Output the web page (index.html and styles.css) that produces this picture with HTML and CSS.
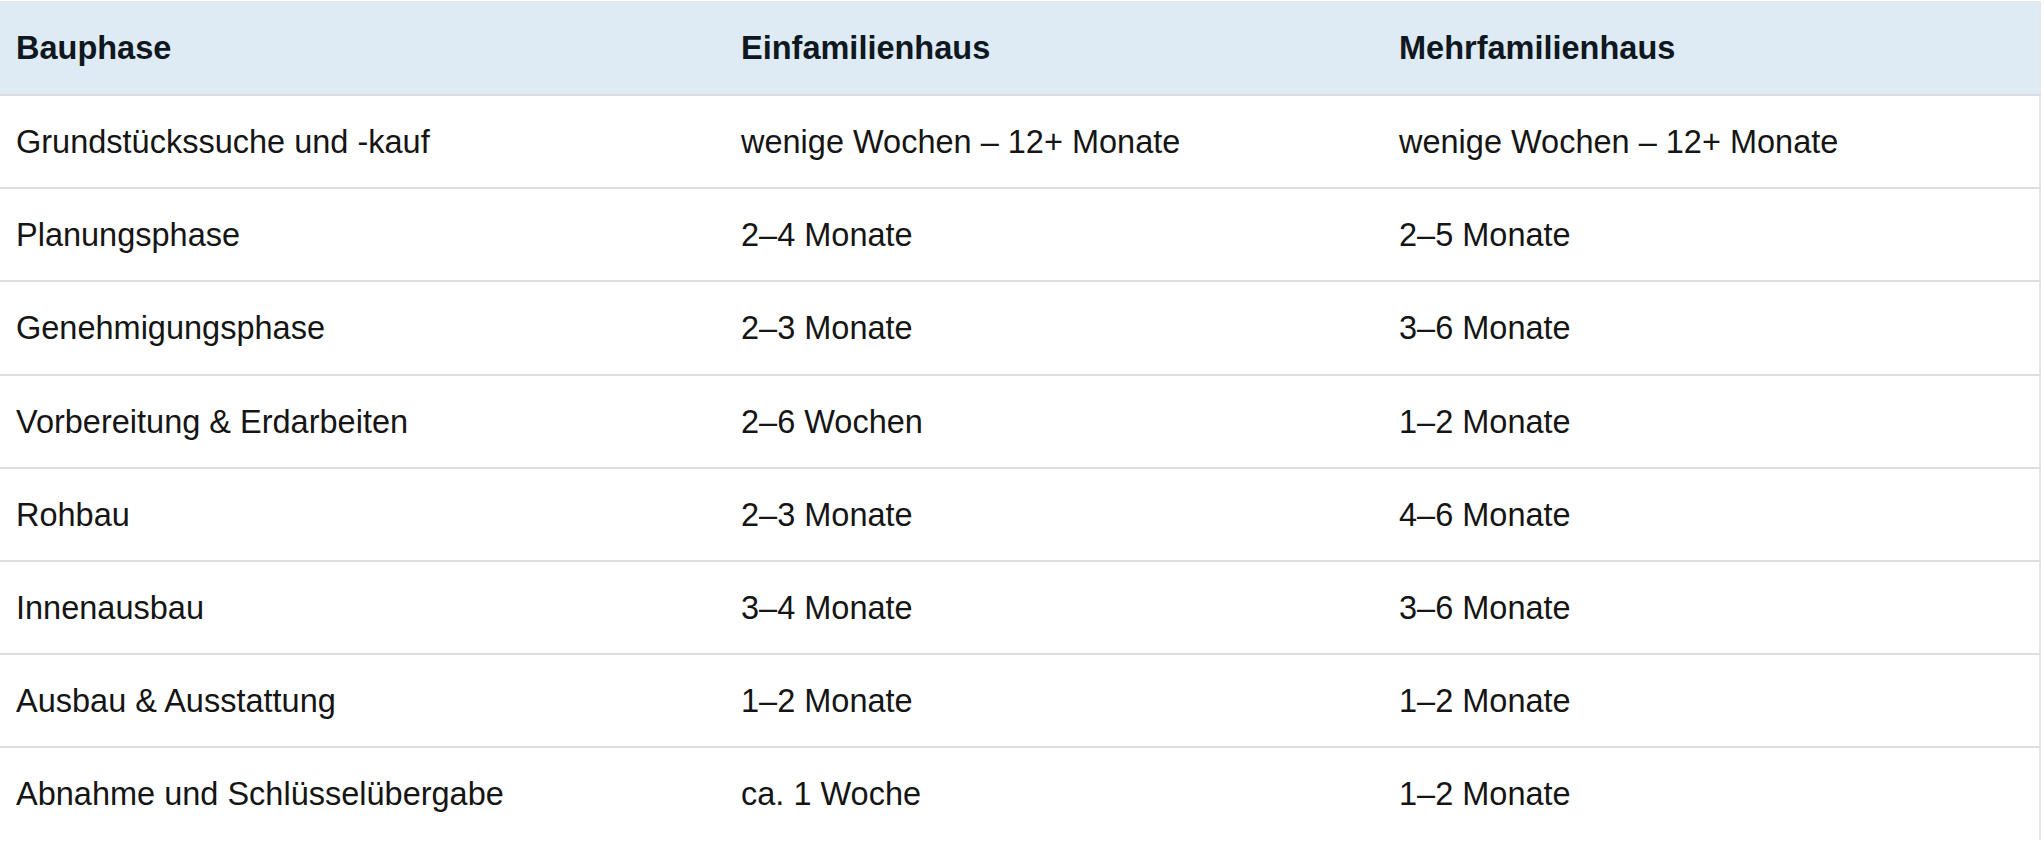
FILE: index.html
```html
<!DOCTYPE html>
<html lang="de">
<head>
<meta charset="utf-8">
<link rel="stylesheet" href="styles.css">
</head>
<body>
<div class="wrap">
<table class="phases">
  <colgroup>
    <col class="c1"><col class="c2"><col class="c3">
  </colgroup>
  <thead>
    <tr><th>Bauphase</th><th>Einfamilienhaus</th><th>Mehrfamilienhaus</th></tr>
  </thead>
  <tbody>
    <tr><td>Grundstückssuche und -kauf</td><td>wenige Wochen – 12+ Monate</td><td>wenige Wochen – 12+ Monate</td></tr>
    <tr><td>Planungsphase</td><td>2–4 Monate</td><td>2–5 Monate</td></tr>
    <tr><td>Genehmigungsphase</td><td>2–3 Monate</td><td>3–6 Monate</td></tr>
    <tr><td>Vorbereitung &amp; Erdarbeiten</td><td>2–6 Wochen</td><td>1–2 Monate</td></tr>
    <tr><td>Rohbau</td><td>2–3 Monate</td><td>4–6 Monate</td></tr>
    <tr><td>Innenausbau</td><td>3–4 Monate</td><td>3–6 Monate</td></tr>
    <tr><td>Ausbau &amp; Ausstattung</td><td>1–2 Monate</td><td>1–2 Monate</td></tr>
    <tr><td>Abnahme und Schlüsselübergabe</td><td>ca. 1 Woche</td><td>1–2 Monate</td></tr>
  </tbody>
</table>
</div>
</body>
</html>
```
FILE: styles.css
```css
html, body {
  margin: 0;
  padding: 0;
  background: #ffffff;
}
.wrap {
  padding-top: 1px;
  width: 2040px;
}
.phases {
  width: 2040px;
  border-collapse: collapse;
  table-layout: fixed;
  font-family: "Liberation Sans", Arial, sans-serif;
  font-size: 32.5px;
  color: #151515;
  border-top: 1px solid #e6e9ec;
  border-right: 2px solid #e4e6e8;
}
.c1 { width: 725px; }
.c2 { width: 658px; }
.c3 { width: 657px; }
.phases th {
  background: #deebf5;
  color: #0f1820;
  font-weight: bold;
  text-align: left;
  padding: 0 16px;
  height: 92px;
  border-bottom: 2px solid #d8dde2;
}
.phases td {
  text-align: left;
  padding: 2px 16px 0;
  height: 89.2px;
  border-bottom: 2px solid #dedede;
}
.phases tbody tr:last-child td {
  border-bottom: none;
}
```
